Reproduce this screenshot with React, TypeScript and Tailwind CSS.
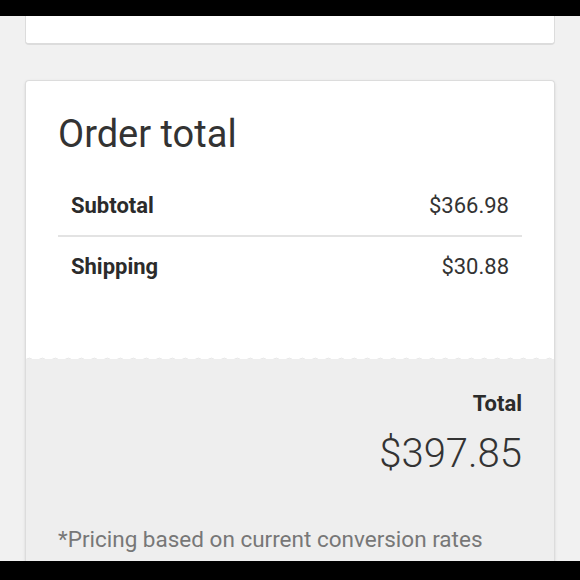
import React from "react";

const font = { fontFamily: "Roboto, 'Noto Sans', sans-serif" };

function Scallop() {
  // thin scalloped edge where the white part meets the grey total area
  return (
    <svg className="block w-full h-[6px]" preserveAspectRatio="none" aria-hidden>
      <defs>
        <pattern id="sc" width="13" height="6" patternUnits="userSpaceOnUse">
          <rect x="0" y="3" width="13" height="3" fill="#eeeeee" />
          <path d="M0 3.5 Q3.25 0.8 6.5 3.5 T13 3.5" fill="none" stroke="#dedede" strokeWidth="1" />
          <path d="M0 3.5 Q3.25 0.8 6.5 3.5 T13 3.5 V6 H0 Z" fill="#eeeeee" />
        </pattern>
      </defs>
      <rect width="100%" height="6" fill="url(#sc)" />
    </svg>
  );
}

function Row({ label, value, last }: { label: string; value: string; last?: boolean }) {
  return (
    <div className={`flex h-[60px] items-center justify-between px-[13px] ${last ? "" : "border-b-2 border-[#e3e3e3]"}`}>
      <span className="text-[22px] leading-7 font-bold text-[#2b2b2b]">{label}</span>
      <span className="text-[22px] leading-7 text-[#333]">{value}</span>
    </div>
  );
}

export default function App() {
  return (
    <div className="flex h-[580px] w-[580px] flex-col overflow-hidden bg-[#f1f1f1]" style={font}>
      <div className="h-4 shrink-0 bg-black" />
      <div className="flex flex-1 flex-col overflow-hidden px-[25px]">
        <div className="h-[29px] shrink-0 rounded-b-[4px] border-x border-b-2 border-[#dcdcdc] bg-white" />
        <div className="mt-[35px] flex flex-1 flex-col overflow-hidden rounded-t-[4px] border border-b-0 border-[#dcdcdc] bg-white shadow-sm">
          <div className="px-8 pt-[31px]">
            <h2 className="text-[38px] leading-[44px] text-[#333]">Order total</h2>
            <div className="mt-[21px]">
              <Row label="Subtotal" value="$366.98" />
              <Row label="Shipping" value="$30.88" last />
            </div>
          </div>
          <div className="mt-[59px] -mb-[3px]">
            <Scallop />
          </div>
          <div className="flex flex-1 flex-col bg-[#eeeeee] px-8 pt-[31px]">
            <div className="text-right text-[22px] font-bold leading-7 text-[#2b2b2b]">Total</div>
            <div className="mt-[12px] text-right text-[40px] font-light leading-[48px] text-[#333]">$397.85</div>
            <p className="mt-[47px] text-[22.5px] leading-7 text-[#777]">*Pricing based on current conversion rates</p>
          </div>
        </div>
      </div>
      <div className="h-[19px] shrink-0 bg-black" />
    </div>
  );
}
